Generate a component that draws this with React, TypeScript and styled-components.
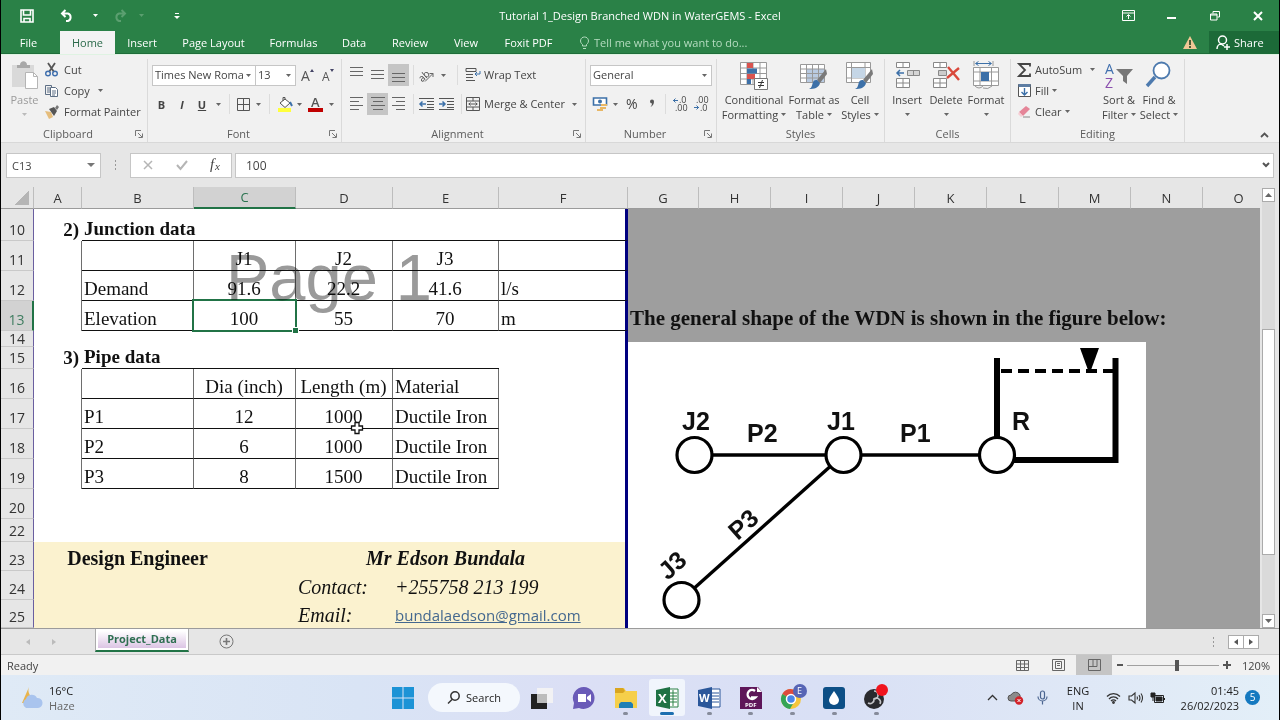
import React from "react";
import styled, { createGlobalStyle, css } from "styled-components";

const UI = `"Open Sans", "Noto Sans", sans-serif`;
const SERIF = `"Liberation Serif", "Times New Roman", serif`;
const GREEN = "#2a8147";
const CHROME = "#e6e6e6";
const LINE = "#c6c6c6";

const Global = createGlobalStyle`
  *, *::before, *::after { box-sizing: border-box; }
  body { margin: 0; background: #000; font-family: ${UI}; font-size: 11px; color: #444; }
  button, input, select { font: inherit; color: inherit; }
  button { background: none; border: 0; padding: 0; margin: 0; white-space: nowrap; }
  svg { display: block; flex: none; overflow: visible; }
`;

const Window = styled.div`
  display: flex;
  flex-direction: column;
  min-height: 100vh;
  border: solid #000;
  border-width: 0 1px;
  background: ${CHROME};
  overflow: hidden;
`;

/* ---------- title bar and ribbon tabs ---------- */

const TitleBar = styled.header`
  display: grid;
  grid-template-columns: 1fr auto 1fr;
  align-items: center;
  height: 31px;
  background: ${GREEN};
  color: #fff;
`;
const QuickAccess = styled.div`
  display: flex;
  align-items: center;
  padding-left: 12px;
`;
const WindowButtons = styled.div`
  display: flex;
  justify-content: flex-end;
`;
const WindowButton = styled.button`
  display: grid;
  place-items: center;
  width: 43px;
  height: 28px;
`;
const Title = styled.h1`
  margin: 0;
  font-size: 11px;
  font-weight: 400;
  line-height: 16px;
`;
const Slot = styled.button<{ $w: number; $on?: boolean; $start?: boolean }>`
  display: flex;
  align-items: center;
  justify-content: ${(p) => (p.$start ? "flex-start" : "center")};
  width: ${(p) => p.$w}px;
  height: 22px;
  flex: none;
  background: ${(p) => (p.$on ? "#c5c5c5" : "transparent")};
`;
const TabBar = styled.nav`
  display: flex;
  align-items: stretch;
  height: 23px;
  background: ${GREEN};
  color: #fff;
  box-shadow: inset 0 -1px 0 #1f6d3a;
`;
const Tab = styled.button<{ $w: number; $active?: boolean }>`
  width: ${(p) => p.$w}px;
  flex: none;
  line-height: 20px;
  &:first-child { margin-right: 4px; }
  ${(p) =>
    p.$active &&
    css`
      background: #f3f3f3;
      color: #2b6a4a;
    `}
`;
const TellMe = styled.button`
  display: flex;
  align-items: center;
  gap: 4px;
  padding-left: 13px;
  color: #b5dcc0;
`;
const TabBarEnd = styled.div`
  display: flex;
  align-items: center;
  gap: 12px;
  margin-left: auto;
`;
const Share = styled.button`
  display: flex;
  align-items: center;
  gap: 4px;
  width: 70px;
  height: 23px;
  padding-left: 7px;
  background: #1c6a38;
`;

/* ---------- ribbon ---------- */

const Ribbon = styled.section`
  display: flex;
  height: 89px;
  padding-top: 4px;
  background: #f1f1f1;
  border-top: 1px solid #dff3e2;
  border-bottom: 1px solid #d8d8d8;
`;
const Group = styled.div<{ $w: number; $pad?: number }>`
  display: flex;
  flex-direction: column;
  width: ${(p) => p.$w}px;
  flex: none;
  padding-left: ${(p) => p.$pad ?? 0}px;
  border-right: 1px solid #dadada;
`;
const GroupBody = styled.div<{ $rows?: boolean }>`
  display: flex;
  flex-direction: ${(p) => (p.$rows ? "column" : "row")};
  gap: ${(p) => (p.$rows ? 7 : 0)}px;
  padding-top: ${(p) => (p.$rows ? 5 : 0)}px;
  height: 67px;
`;
const GroupFoot = styled.div<{ $pull?: number }>`
  display: flex;
  align-items: center;
  height: 15px;
  margin-left: -${(p) => p.$pull ?? 0}px;
  color: #5c5c5c;
`;
const GroupLabel = styled.span`
  flex: 1;
  text-align: center;
  line-height: 14px;
`;
const Launcher = styled.button`
  width: 12px;
  height: 8px;
`;
const Tools = styled.div`
  display: flex;
  align-items: center;
  height: 22px;
`;
const Sep = styled.i<{ $w: number }>`
  display: block;
  width: ${(p) => p.$w}px;
  height: 20px;
  background: linear-gradient(#dcdcdc, #dcdcdc) center / 1px 100% no-repeat;
`;
const SmallTool = styled.button<{ $gap?: number }>`
  display: flex;
  align-items: center;
  gap: ${(p) => p.$gap ?? 4}px;
  height: 21px;
  line-height: 16px;
`;
const Stack = styled.div<{ $w?: number }>`
  display: flex;
  flex-direction: column;
  width: ${(p) => (p.$w ? p.$w + "px" : "auto")};
`;
const BigTool = styled.button<{ $w: number; $dim?: boolean }>`
  display: flex;
  flex-direction: column;
  align-items: center;
  width: ${(p) => p.$w}px;
  flex: none;
  padding-top: 2px;
  line-height: 15px;
  color: ${(p) => (p.$dim ? "#9b9b9b" : "#444")};
  svg { margin-bottom: 2px; }
`;
const BigLine = styled.span`
  display: flex;
  align-items: center;
  gap: 3px;
  height: 15px;
  svg { margin: 0; }
`;
const Picker = styled.label<{ $w: number }>`
  position: relative;
  display: flex;
  align-items: center;
  width: ${(p) => p.$w}px;
  height: 21px;
  background: #fff;
  border: 1px solid ${LINE};
  & + & { border-left: 0; }
  select {
    appearance: none;
    width: 100%;
    padding: 0 12px 0 2px;
    border: 0;
    background: none;
    line-height: 16px;
    outline: 0;
  }
  svg { position: absolute; right: 4px; }
`;
const Collapse = styled.button`
  align-self: flex-end;
  margin: 0 10px 4px auto;
`;

/* ---------- formula bar ---------- */

const FormulaBar = styled.div`
  display: flex;
  align-items: center;
  padding: 10px 5px;
  height: 44px;
`;
const NameBox = styled.label`
  display: flex;
  align-items: center;
  width: 95px;
  height: 25px;
  padding: 0 5px;
  background: #fff;
  border: 1px solid ${LINE};
  input { width: 100%; border: 0; padding: 0; background: none; outline: 0; }
`;
const Dots = styled.i`
  width: 29px;
  height: 12px;
  background: radial-gradient(circle, #999 1px, transparent 1px) center / 29px 4px;
`;
const FormulaButtons = styled.div`
  display: flex;
  align-items: center;
  width: 102px;
  height: 25px;
  background: #fff;
  border: 1px solid ${LINE};
`;
const FormulaField = styled.label`
  display: flex;
  align-items: center;
  flex: 1;
  height: 25px;
  margin-left: 3px;
  padding: 0 3px 0 10px;
  background: #fff;
  border: 1px solid ${LINE};
  input { flex: 1; border: 0; padding: 0; background: none; outline: 0; font-size: 12px; }
`;

/* ---------- sheet ---------- */

const SheetRow = styled.main`
  display: flex;
  flex: 1;
`;
const Sheet = styled.div`
  position: relative;
  flex: 1;
  min-width: 0;
  overflow: hidden;
  background: #9e9e9e;
`;
const Grid = styled.table`
  table-layout: fixed;
  width: 100%;
  min-width: 1274px;
  border-collapse: separate;
  border-spacing: 0;
`;
const ColHead = styled.th<{ $on?: boolean }>`
  height: 22px;
  padding: 0;
  font-size: 13px;
  font-weight: 400;
  line-height: 18px;
  color: ${(p) => (p.$on ? "#2a7350" : "#333")};
  background: ${(p) => (p.$on ? "#d2d2d2" : CHROME)};
  border-right: 1px solid #bdbdbd;
  border-bottom: ${(p) => (p.$on ? "2px solid #217346" : "1px solid #9b9b9b")};
`;
const Corner = styled(ColHead)`
  background: linear-gradient(135deg, transparent 50%, #b5b5b5 50%) 13px 4px / 15px 14px no-repeat, ${CHROME};
`;
const RowHead = styled.th<{ $on?: boolean; $h: number }>`
  height: ${(p) => p.$h}px;
  padding: 0 0 ${(p) => (p.$h < 20 ? 0 : 3)}px;
  vertical-align: bottom;
  font-size: 14px;
  font-weight: 400;
  line-height: 15px;
  color: ${(p) => (p.$on ? "#3f7d60" : "#333")};
  background: ${(p) => (p.$on ? "#d2d2d2" : CHROME)};
  border-bottom: 1px solid #c9c9c9;
  border-right: ${(p) => (p.$on ? "2px solid #217346" : "1px solid #6a5fa0")};
`;
const Cell = styled.td<{ $fill: string; $bottom?: boolean; $right?: boolean; $edge?: boolean; $selected?: boolean }>`
  position: ${(p) => (p.$selected ? "relative" : "static")};
  padding: 0 3px 0 2px;
  vertical-align: bottom;
  background: ${(p) => p.$fill};
  font-family: ${SERIF};
  line-height: 19px;
  color: #111;
  white-space: nowrap;
  border-bottom: ${(p) => (p.$bottom ? "1px solid #111" : "0")};
  border-right: ${(p) => (p.$edge ? "3px solid #00007f" : p.$right ? "1px solid #6e6e6e" : "0")};
`;
const TEXT_SIZE = { body: 19, lead: 20, note: 21 };
type Size = keyof typeof TEXT_SIZE;
const Content = styled.div<{ $align?: string; $bold?: boolean; $italic?: boolean; $size: Size }>`
  display: flex;
  height: ${(p) => (p.$size === "body" ? 21 : 22)}px;
  justify-content: ${(p) => p.$align ?? "flex-start"};
  font-weight: ${(p) => (p.$bold ? 700 : 400)};
  font-style: ${(p) => (p.$italic ? "italic" : "normal")};
  font-size: ${(p) => TEXT_SIZE[p.$size]}px;
`;
const Mail = styled.a`
  font-family: ${UI};
  font-size: 15px;
  color: #44688f;
`;
const Selection = styled.div`
  position: absolute;
  inset: -2px;
  border: 2px solid #217346;
  &::after {
    content: "";
    position: absolute;
    right: -3px;
    bottom: -3px;
    width: 5px;
    height: 5px;
    background: #217346;
    outline: 1px solid #fff;
  }
`;
const Watermark = styled.div`
  position: absolute;
  left: 225px;
  top: 54px;
  font: 65px/74px "Liberation Sans", Arial, sans-serif;
  color: #9a9a9a;
  mix-blend-mode: multiply;
  pointer-events: none;
`;
const Pointer = styled.svg`
  position: absolute;
  left: 349px;
  top: 234px;
`;
const Figure = styled.svg`
  position: absolute;
  left: 627px;
  top: 155px;
  background: #fff;
  overflow: hidden;
`;
const ScrollBar = styled.div`
  display: flex;
  flex-direction: column;
  width: 19px;
  padding: 1px 4px 0 2px;
  background: ${CHROME};
`;
const ScrollButton = styled.button`
  display: grid;
  place-items: center;
  height: 14px;
  background: #fff;
  border: 1px solid #ababab;
`;
const Track = styled.i<{ $grow: number }>`
  flex: ${(p) => p.$grow};
  background: #dadada;
`;
const Thumb = styled.i<{ $grow: number }>`
  flex: ${(p) => p.$grow};
  background: #fff;
  border: 1px solid #ababab;
`;

/* ---------- sheet tabs and status ---------- */

const SheetTabs = styled.div`
  display: flex;
  align-items: center;
  height: 27px;
  border-top: 1px solid #9b9b9b;
  border-bottom: 1px solid #c9c9c9;
`;
const SheetArrows = styled.div`
  display: flex;
  align-items: center;
  gap: 22px;
  width: 94px;
  padding-left: 25px;
`;
const SheetTab = styled.button`
  align-self: flex-start;
  width: 94px;
  height: 23px;
  padding: 0 2px 2px;
  border: 1px solid #ababab;
  border-top: 0;
  border-bottom: 2px solid #217346;
  background: linear-gradient(#fff 10%, #dcc4e4) center top / 88px 19px no-repeat, #fff;
  font-weight: 700;
  color: #2f6f52;
`;
const AddSheet = styled.button`
  margin-left: 30px;
`;
const SheetScroll = styled.div`
  display: flex;
  align-items: center;
  margin-left: auto;
  padding-right: 20px;
`;
const SideButton = styled.button`
  display: grid;
  place-items: center;
  width: 16px;
  height: 14px;
  background: #fff;
  border: 1px solid #ababab;
  & + & { margin-left: -1px; }
`;
const StatusBar = styled.footer`
  display: flex;
  align-items: center;
  height: 20px;
  padding: 0 9px 0 6px;
  background: #f1f1f1;
`;
const StatusTools = styled.div`
  display: flex;
  align-items: center;
  margin-left: auto;
`;
const ViewButton = styled.button<{ $on?: boolean }>`
  display: grid;
  place-items: center;
  width: 36px;
  height: 20px;
  background: ${(p) => (p.$on ? "#c5c5c5" : "transparent")};
`;
const Zoom = styled.input`
  appearance: none;
  width: 92px;
  height: 12px;
  margin: 0 4px 0 0;
  background: linear-gradient(#a0a0a0, #a0a0a0) center / 100% 1px no-repeat;
  &::-webkit-slider-thumb {
    appearance: none;
    width: 4px;
    height: 11px;
    background: #555;
  }
`;
const Percent = styled.span`
  width: 39px;
  text-align: right;
`;

/* ---------- taskbar ---------- */

const Taskbar = styled.footer`
  display: grid;
  grid-template-columns: 1fr auto 1fr;
  align-items: center;
  height: 45px;
  background: linear-gradient(90deg, #dfeaf6, #d9e4f5 28%, #dbdff5 45%, #d9e0f5 65%, #dfe8f6 85%, #e3eff8);
  color: #222;
  line-height: 15px;
`;
const Weather = styled.button`
  display: flex;
  align-items: center;
  gap: 4px;
  padding-left: 18px;
  text-align: left;
  line-height: 15px;
`;
const Dim = styled.span`
  color: #666;
`;
const Dock = styled.div`
  display: flex;
  align-items: center;
`;
const SearchPill = styled.button`
  display: flex;
  align-items: center;
  justify-content: center;
  gap: 6px;
  width: 92px;
  height: 29px;
  margin: 0 4px 0 8px;
  border-radius: 15px;
  background: #f4f8fd;
`;
const Apps = styled.div`
  display: flex;
  justify-content: space-between;
  width: 370px;
`;
const AppButton = styled.button<{ $on?: boolean; $run?: boolean }>`
  position: relative;
  display: grid;
  place-items: center;
  width: 36px;
  height: 37px;
  border-radius: 3px;
  background: ${(p) => (p.$on ? "#f1f5fc" : "transparent")};
  &::after {
    content: "";
    position: absolute;
    bottom: 1px;
    display: ${(p) => (p.$run ? "block" : "none")};
    width: ${(p) => (p.$on ? 14 : 5)}px;
    height: 3px;
    border-radius: 2px;
    background: ${(p) => (p.$on ? "#1d6fb0" : "#868b9a")};
  }
`;
const Tray = styled.div`
  display: flex;
  align-items: center;
  justify-content: flex-end;
  padding-right: 19px;
`;
const TrayText = styled.button<{ $w: number; $end?: boolean }>`
  width: ${(p) => p.$w}px;
  text-align: ${(p) => (p.$end ? "right" : "center")};
  line-height: 15px;
`;
const Badge = styled.span`
  width: 15px;
  height: 15px;
  margin-left: 6px;
  border-radius: 50%;
  background: #1479c0;
  color: #fff;
  text-align: center;
  font-size: 10px;
`;

/* ---------- icons ---------- */

type IconProps = { w: number; h: number; children: React.ReactNode; sw?: number; c?: string };
const Icon = ({ w, h, children, sw = 1, c = "#555" }: IconProps) => (
  <svg width={w} height={h} viewBox={`0 0 ${w} ${h}`} fill="none" stroke={c} strokeWidth={sw} aria-hidden="true">
    {children}
  </svg>
);
const Caret = ({ c = "#666" }: { c?: string }) => (
  <Icon w={5} h={3} c="none"><path d="M0 0h5L2.5 3z" fill={c} /></Icon>
);
const LaunchIcon = () => (
  <Icon w={8} h={8} c="#777"><path d="M.5 6V.5H6M3 3l4 4M7.5 3.5v4h-4" /></Icon>
);
const Lines = ({ rows, y = 0 }: { rows: [number, number][]; y?: number }) => (
  <Icon w={14} h={16} c="#666">
    <path d={rows.map(([a, b], i) => `M${a} ${y + i * 4 + 1.5}H${b}`).join("")} />
  </Icon>
);
const Brush = () => (
  <>
    <path d="M27 8l1 5-7 9-3-3z" fill="#7a7a7a" stroke="none" />
    <path d="M18 19l3 3c-1 5-6 6-11 6 3-1 3-4 4-7 1-2 3-2 4-2z" fill="#3c70a8" stroke="none" />
  </>
);

/* ---------- sheet data ---------- */

type Datum = {
  v: string; align?: "center" | "flex-end"; bold?: boolean; italic?: boolean; size?: Size; mail?: boolean;
};
const mid = (v: string): Datum => ({ v, align: "center" });
const COLS: [string, number | null][] = [
  ["A", 48], ["B", 112], ["C", 102], ["D", 97], ["E", 106], ["F", 129], ["G", 71], ["H", 72],
  ["I", 72], ["J", 72], ["K", 72], ["L", 72], ["M", 72], ["N", 72], ["O", null],
];
const ROWS: { n: number; h: number; cells: Record<string, Datum> }[] = [
  { n: 10, h: 32, cells: { A: { v: "2)", align: "flex-end", bold: true }, B: { v: "Junction data", bold: true } } },
  { n: 11, h: 30, cells: { C: mid("J1"), D: mid("J2"), E: mid("J3") } },
  { n: 12, h: 30, cells: { B: { v: "Demand" }, C: mid("91.6"), D: mid("22.2"), E: mid("41.6"), F: { v: "l/s" } } },
  {
    n: 13, h: 30,
    cells: {
      B: { v: "Elevation" }, C: mid("100"), D: mid("55"), E: mid("70"), F: { v: "m" },
      G: { v: "The general shape of the WDN is shown in the figure below:", bold: true, size: "note" },
    },
  },
  { n: 14, h: 16, cells: {} },
  { n: 15, h: 22, cells: { A: { v: "3)", align: "flex-end", bold: true }, B: { v: "Pipe data", bold: true } } },
  { n: 16, h: 30, cells: { C: mid("Dia (inch)"), D: mid("Length (m)"), E: { v: "Material" } } },
  { n: 17, h: 30, cells: { B: { v: "P1" }, C: mid("12"), D: mid("1000"), E: { v: "Ductile Iron" } } },
  { n: 18, h: 30, cells: { B: { v: "P2" }, C: mid("6"), D: mid("1000"), E: { v: "Ductile Iron" } } },
  { n: 19, h: 30, cells: { B: { v: "P3" }, C: mid("8"), D: mid("1500"), E: { v: "Ductile Iron" } } },
  { n: 20, h: 30, cells: {} },
  { n: 22, h: 23, cells: {} },
  {
    n: 23, h: 29,
    cells: {
      B: { v: "Design Engineer", align: "center", bold: true, size: "lead" },
      E: { v: "Mr Edson Bundala", align: "center", bold: true, italic: true, size: "lead" },
    },
  },
  { n: 24, h: 29, cells: { D: { v: "Contact:", italic: true, size: "lead" }, E: { v: "+255758 213 199", italic: true, size: "lead" } } },
  { n: 25, h: 28, cells: { D: { v: "Email:", italic: true, size: "lead" }, E: { v: "bundalaedson@gmail.com", size: "lead", mail: true } } },
];

const lastTableCol = (n: number) => (n >= 10 && n <= 13 ? "F" : n >= 15 && n <= 19 ? "E" : "");
const hasBottom = (n: number, c: string) => c >= "B" && c <= lastTableCol(n);
const hasRight = (n: number, c: string) => n !== 10 && n !== 15 && c <= lastTableCol(n);

const SheetGrid = () => (
  <Grid>
    <colgroup>
      <col style={{ width: 33 }} />
      {COLS.map(([c, w]) => <col key={c} style={w ? { width: w } : undefined} />)}
    </colgroup>
    <thead>
      <tr>
        <Corner aria-label="Select all" />
        {COLS.map(([c]) => <ColHead key={c} scope="col" $on={c === "C"}>{c}</ColHead>)}
      </tr>
    </thead>
    <tbody>
      {ROWS.map((r) => (
        <tr key={r.n}>
          <RowHead scope="row" $h={r.h} $on={r.n === 13}>{r.n}</RowHead>
          {COLS.map(([c]) => {
            const d = r.cells[c];
            const fill = c > "F" ? "#9e9e9e" : r.n >= 23 ? "#fbf2cf" : "#fff";
            const selected = r.n === 13 && c === "C";
            return (
              <Cell key={c} $fill={fill} $bottom={hasBottom(r.n, c)} $right={hasRight(r.n, c)} $edge={c === "F"} $selected={selected}>
                {d && (
                  <Content $align={d.align} $bold={d.bold} $italic={d.italic} $size={d.size ?? "body"}>
                    {d.mail ? <Mail href={`mailto:${d.v}`}>{d.v}</Mail> : d.v}
                  </Content>
                )}
                {selected && <Selection />}
              </Cell>
            );
          })}
        </tr>
      ))}
    </tbody>
  </Grid>
);

const Network = () => (
  <Figure width={518} height={287} viewBox="628 342 518 287" role="img" aria-label="Branched water network">
    <g stroke="#000" fill="none">
      <path d="M694 455H997" strokeWidth={3.4} />
      <path d="M843 455L681 600" strokeWidth={3.4} />
      <path d="M997 358V455M1115.500 358V460H1010" strokeWidth={6} strokeLinejoin="miter" />
      <path d="M1001 371H1113" strokeWidth={4} strokeDasharray="11 6" />
    </g>
    <path d="M1080 348h19l-8 22h-3z" fill="#000" />
    <g fill="#fff" stroke="#000" strokeWidth={3.2}>
      <circle cx={694.5} cy={455} r={17.500} />
      <circle cx={843.5} cy={455} r={17.500} />
      <circle cx={997} cy={455} r={17.500} />
      <circle cx={681.5} cy={600} r={17.500} />
    </g>
    <g fontFamily='"Liberation Sans", Arial, sans-serif' fontWeight={700} fontSize={25} fill="#111">
      <text x={682} y={430}>J2</text>
      <text x={747} y={442}>P2</text>
      <text x={827} y={430}>J1</text>
      <text x={900} y={442}>P1</text>
      <text x={1012} y={430}>R</text>
      <text transform="translate(743 524) rotate(-42)" textAnchor="middle" dominantBaseline="central">P3</text>
      <text transform="translate(672 565) rotate(-42)" textAnchor="middle" dominantBaseline="central">J3</text>
    </g>
  </Figure>
);

/* ---------- ribbon groups ---------- */

const TABS: [string, number][] = [
  ["Home", 55], ["Insert", 54], ["Page Layout", 89], ["Formulas", 71], ["Data", 50], ["Review", 62], ["View", 50], ["Foxit PDF", 75],
];

const Foot = ({ label, launch, pull }: { label: string; launch?: boolean; pull?: number }) => (
  <GroupFoot $pull={pull}>
    <GroupLabel>{label}</GroupLabel>
    {launch && <Launcher aria-label={`${label} settings`}><LaunchIcon /></Launcher>}
  </GroupFoot>
);

const Clipboard = () => (
  <Group $w={147} $pad={4}>
    <GroupBody>
      <BigTool $w={39} $dim>
        <Icon w={28} h={29} c="none">
          <path d="M1 4h22v22H1z" fill="#d9d9d9" />
          <path d="M6 7V4h3c0-5 7-5 7 0h3v3z" fill="#a8a8a8" />
          <path d="M14.500 11.500h8l4 4v12h-12z" fill="#fff" stroke="#b5b5b5" />
          <path d="M22.500 11.500v4h4" stroke="#b5b5b5" />
        </Icon>
        Paste
        <BigLine><Caret c="#bbb" /></BigLine>
      </BigTool>
      <Stack>
        <SmallTool>
          <Icon w={16} h={15}>
            <path d="M4 1l6 9M11 1L5 10" strokeWidth={1.8} />
            <circle cx={4} cy={11.500} r={2.300} stroke="#3f6fae" strokeWidth={1.4} />
            <circle cx={11} cy={11.500} r={2.300} stroke="#3f6fae" strokeWidth={1.4} />
          </Icon>
          Cut
        </SmallTool>
        <SmallTool>
          <Icon w={16} h={14} c="#5d6f85">
            <path d="M1.500 1.500h6v9h-6zM3 4h3M3 6h3M3 8h3" />
            <path d="M6.500 3.500h5l2 2v7h-7z" fill="#fff" />
            <path d="M8 7h4M8 9h4M8 11h3" />
          </Icon>
          Copy <Slot as="span" $w={14}><Caret /></Slot>
        </SmallTool>
        <SmallTool>
          <Icon w={16} h={14} c="none">
            <path d="M1 6l6 1 2 5-4 2z" fill="#e5bd7c" />
            <path d="M5 4l5-2 3 4-3 5z" fill="#555" />
            <path d="M11 3l2-3 2 2-2 3z" fill="#777" />
          </Icon>
          Format Painter
        </SmallTool>
      </Stack>
    </GroupBody>
    <Foot label="Clipboard" launch pull={4} />
  </Group>
);

const FontGroup = () => (
  <Group $w={194} $pad={4}>
    <GroupBody $rows>
      <Tools>
        <Picker $w={104}><select aria-label="Font"><option>Times New Roman</option></select><Caret /></Picker>
        <Picker $w={40}><select aria-label="Font size"><option>13</option></select><Caret /></Picker>
        <Slot $w={24} aria-label="Grow font">
          <Icon w={14} h={14} c="none"><text x={0} y={13} fontSize={14} fill="#555">A</text><path d="M9 4l2-3 2 3z" fill="#446" /></Icon>
        </Slot>
        <Slot $w={16} aria-label="Shrink font">
          <Icon w={13} h={14} c="none"><text x={0} y={13} fontSize={12} fill="#555">A</text><path d="M8 1h4l-2 3z" fill="#446" /></Icon>
        </Slot>
      </Tools>
      <Tools>
        <Slot $w={19}><b>B</b></Slot>
        <Slot $w={22}><b><i>I</i></b></Slot>
        <Slot $w={18}><b><u>U</u></b></Slot>
        <Slot $w={14} aria-label="Underline styles"><Caret /></Slot>
        <Sep $w={8} />
        <Slot $w={20} aria-label="Borders"><Icon w={13} h={13}><path d="M.5.5h12v12H.5zM6.500.5v12M.5 6.500h12" /></Icon></Slot>
        <Slot $w={10} aria-label="Border styles"><Caret /></Slot>
        <Sep $w={12} />
        <Slot $w={20} aria-label="Fill colour">
          <Icon w={16} h={16}>
            <path d="M3 7l5-4 5 4-5 4.500z" fill="#fff" /><path d="M6 5V1.500h2V4" /><path d="M13 6l2 4" stroke="#3c70a8" strokeWidth={2} />
            <path d="M1 12h13v4H1z" fill="#ffff3c" stroke="none" />
          </Icon>
        </Slot>
        <Slot $w={8} aria-label="Fill colours"><Caret /></Slot>
        <Slot $w={24} aria-label="Font colour">
          <Icon w={15} h={16} c="none"><text x={3} y={11} fontSize={13} fontWeight={600} fill="#555">A</text><path d="M0 12h15v4H0z" fill="#c00000" /></Icon>
        </Slot>
        <Slot $w={8} aria-label="Font colours"><Caret /></Slot>
      </Tools>
    </GroupBody>
    <Foot label="Font" launch pull={4} />
  </Group>
);

const Alignment = () => (
  <Group $w={244} $pad={4}>
    <GroupBody $rows>
      <Tools>
        <Slot $w={21} aria-label="Top align"><Lines rows={[[0, 13], [0, 13], [0, 13]]} y={-1} /></Slot>
        <Slot $w={21} aria-label="Middle align"><Lines rows={[[0, 13], [0, 13], [0, 13]]} y={2} /></Slot>
        <Slot $w={21} $on aria-label="Bottom align"><Lines rows={[[0, 13], [0, 13], [0, 13]]} y={5} /></Slot>
        <Sep $w={8} />
        <Slot $w={20} aria-label="Orientation">
          <Icon w={16} h={14} c="none">
            <text x={0} y={11} fontSize={10} fill="#444" transform="rotate(-42 6 9)">ab</text>
            <path d="M6 13.500l8-8M14 9V5.500h-3.500" stroke="#666" />
          </Icon>
        </Slot>
        <Slot $w={12} aria-label="Orientations"><Caret /></Slot>
        <Sep $w={16} />
        <SmallTool $gap={3}>
          <Icon w={16} h={16}>
            <path d="M1 1.500h10v3H1zM1 7.500h7M1 10.500h7M1 13.500h9" /><path d="M11 7h4V4M10 7l2-2M10 7l2 2" stroke="#3c70a8" />
          </Icon>
          Wrap Text
        </SmallTool>
      </Tools>
      <Tools>
        <Slot $w={21} aria-label="Align left"><Lines rows={[[0, 13], [0, 9], [0, 13], [0, 9]]} /></Slot>
        <Slot $w={21} $on aria-label="Centre"><Lines rows={[[0, 14], [2, 12], [0, 14], [2, 12]]} /></Slot>
        <Slot $w={21} aria-label="Align right"><Lines rows={[[0, 13], [4, 13], [0, 13], [4, 13]]} /></Slot>
        <Sep $w={8} />
        <Slot $w={20} aria-label="Decrease indent">
          <Icon w={16} h={14}><path d="M0 1.500h15M8 4.500h7M8 7.500h7M8 10.500h7M0 12.500h15" /><path d="M1 7h6M3.500 4.500L1 7l2.500 2.500" stroke="#3c70a8" strokeWidth={1.500} /></Icon>
        </Slot>
        <Slot $w={20} aria-label="Increase indent">
          <Icon w={16} h={14}><path d="M0 1.500h15M8 4.500h7M8 7.500h7M8 10.500h7M0 12.500h15" /><path d="M0 7h6M3.500 4.500L6 7 3.500 9.500" stroke="#3c70a8" strokeWidth={1.500} /></Icon>
        </Slot>
        <Sep $w={8} />
        <SmallTool $gap={3}>
          <Icon w={16} h={16}><path d="M1.500 1.500h13v13h-13zM1.500 5h13M1.500 11h13M8 1.500V5M8 11v3.500M3.500 8h9M5.500 6.500L4 8l1.500 1.500M10.500 6.500L12 8l-1.500 1.500" /></Icon>
          Merge &amp; Center
        </SmallTool>
        <Slot $w={20} aria-label="Merge options"><Caret /></Slot>
      </Tools>
    </GroupBody>
    <Foot label="Alignment" launch pull={4} />
  </Group>
);

const NumberGroup = () => (
  <Group $w={131} $pad={4}>
    <GroupBody $rows>
      <Tools><Picker $w={122}><select aria-label="Number format"><option>General</option></select><Caret /></Picker></Tools>
      <Tools>
        <Slot $w={20} aria-label="Accounting format">
          <Icon w={16} h={16} c="none">
            <path d="M1.500 2h13v7h-13z" fill="#fff" stroke="#3c70a8" strokeWidth={1.600} /><circle cx={8} cy={5.500} r={2} fill="#3c70a8" />
            <path d="M9 8h6v2H9zM8 11h6v2H8zM5 13h6v2H5z" fill="#e8b765" />
          </Icon>
        </Slot>
        <Slot $w={10} aria-label="Accounting formats"><Caret /></Slot>
        <Slot $w={24} aria-label="Percent"><Icon w={14} h={14} c="none"><text x={1} y={12} fontSize={14} fill="#444">%</text></Icon></Slot>
        <Slot $w={16} aria-label="Comma style"><Icon w={6} h={10} c="none"><path d="M1 2.500a2 2 0 114 0Q5 6 1.500 8 3 6 3 4.500A2 2 0 011 2.500z" fill="#555" /></Icon></Slot>
        <Sep $w={10} />
        <Slot $w={21} aria-label="Increase decimal">
          <Icon w={15} h={14} c="none"><text x={6} y={6} fontSize={9} fill="#444">.0</text><text x={2} y={14} fontSize={9} fill="#444">.00</text><path d="M0 3.500h5M2.500 1.500l-2 2 2 2" stroke="#3c70a8" /></Icon>
        </Slot>
        <Slot $w={21} aria-label="Decrease decimal">
          <Icon w={15} h={14} c="none"><text x={2} y={6} fontSize={9} fill="#444">.00</text><text x={6} y={14} fontSize={9} fill="#444">.0</text><path d="M0 10.500h5M2.500 8.500l2 2-2 2" stroke="#3c70a8" /></Icon>
        </Slot>
      </Tools>
    </GroupBody>
    <Foot label="Number" launch pull={4} />
  </Group>
);

const StylesGroup = () => (
  <Group $w={168} $pad={2}>
    <GroupBody>
      <BigTool $w={70}>
        <Icon w={30} h={29} c="#999">
          <path d="M1.500 1.500h26v22h-26zM1.500 7h26M1.500 12.500h26M1.500 18h26M8 1.500v22M14 1.500v22M21 1.500v22" fill="#fff" />
          <path d="M8 2h6v5H8zM8 13h8v5H8z" fill="#d9534f" stroke="none" /><path d="M8 7.500h10v5H8zM8 18h4v5H8z" fill="#3c70a8" stroke="none" />
          <path d="M15.500 17.500h13v11h-13z" fill="#fff" stroke="#777" /><path d="M19 21.500h6M19 24.500h6M23.500 19l-3 8" stroke="#333" />
        </Icon>
        Conditional
        <BigLine>Formatting <Caret /></BigLine>
      </BigTool>
      <BigTool $w={50}>
        <Icon w={30} h={29} c="#999">
          <path d="M1.500 3.500h24v18h-24z" fill="#fff" /><path d="M8 8h17v13H8z" fill="#b9cbe2" stroke="none" />
          <path d="M1.500 8h24M1.500 12.500h24M1.500 17h24M7.500 3.500v18M13.500 3.500v18M19.500 3.500v18" /><Brush />
        </Icon>
        Format as
        <BigLine>Table <Caret /></BigLine>
      </BigTool>
      <BigTool $w={42}>
        <Icon w={30} h={29} c="#999">
          <path d="M1.500 1.500h24v20h-24z" fill="#fff" /><path d="M1.500 6.500h24M1.500 17h24M6.500 1.500v20M20 1.500v20" /><path d="M7 7h13v10H7z" fill="#c5d6e6" stroke="none" /><Brush />
        </Icon>
        Cell
        <BigLine>Styles <Caret /></BigLine>
      </BigTool>
    </GroupBody>
    <Foot label="Styles" pull={2} />
  </Group>
);

const CellsGroup = () => (
  <Group $w={126} $pad={3}>
    <GroupBody>
      <BigTool $w={38}>
        <Icon w={26} h={29} c="#888">
          <path d="M2.500 1.500h13v5h-13zM9 1.500v5M2.500 17.500h13v9h-13zM2.500 22h13M9 17.500v9" fill="#fff" />
          <path d="M13.500 9.500h12v5h-12zM19.500 9.500v5" fill="#d5d5d5" /><path d="M3 12h7M6 9l-3 3 3 3" stroke="#3c70a8" strokeWidth={1.500} />
        </Icon>
        Insert
        <BigLine><Caret /></BigLine>
      </BigTool>
      <BigTool $w={40}>
        <Icon w={28} h={29} c="#888">
          <path d="M1.500 1.500h13v5h-13zM8 1.500v5M1.500 17.500h13v9h-13zM1.500 22h13M8 17.500v9" fill="#fff" />
          <path d="M6.500 9.500h8v5h-8z" fill="#ccc" /><path d="M16 6l11 13M27 7L15 17" stroke="#d9483b" strokeWidth={2.400} />
        </Icon>
        Delete
        <BigLine><Caret /></BigLine>
      </BigTool>
      <BigTool $w={40}>
        <Icon w={28} h={29} c="#999">
          <path d="M1.500 6.500h25v18h-25zM1.500 11h25M1.500 20h25M8 6.500v18M19.500 6.500v18" fill="#fff" /><path d="M9 11h8v9H9z" fill="#3c70a8" stroke="none" />
          <path d="M2 0v5M21 0v5" /><path d="M4 2.500h15M6.500.5l-3 2 3 2M16.500.5l3 2-3 2" stroke="#3c70a8" /><path d="M3 25q4 4 8 0M11 27q5 2 9-2" />
        </Icon>
        Format
        <BigLine><Caret /></BigLine>
      </BigTool>
    </GroupBody>
    <Foot label="Cells" pull={3} />
  </Group>
);

const Editing = () => (
  <Group $w={174} $pad={6}>
    <GroupBody>
      <Stack $w={81}>
        <SmallTool $gap={3}>
          <Icon w={15} h={14} sw={1.800} c="#444"><path d="M13 3.500V1H2l6 6-6 6h11v-2.500" /></Icon>
          AutoSum <Slot as="span" $w={15}><Caret /></Slot>
        </SmallTool>
        <SmallTool $gap={3}>
          <Icon w={15} h={15}><path d="M1.500 1.500h12v12h-12z" fill="#fff" /><path d="M1.500 2.500h12" stroke="#5d7da3" strokeWidth={3} /><path d="M7.500 5v7M4.500 9l3 3 3-3" stroke="#3c70a8" strokeWidth={1.400} /></Icon>
          <BigLine>Fill <Caret /></BigLine>
        </SmallTool>
        <SmallTool $gap={3}>
          <Icon w={15} h={13} c="none"><path d="M2 7l7-6 4 3-7 7z" fill="#e58598" /><path d="M2 7l4 4-2 1-3-3z" fill="#f6cdd4" /><path d="M6 12h7" stroke="#888" /></Icon>
          <BigLine>Clear <Caret /></BigLine>
        </SmallTool>
      </Stack>
      <BigTool $w={42}>
        <Icon w={28} h={29} c="none">
          <text x={0} y={13} fontSize={14} fill="#3f6fae">A</text><text x={0} y={27} fontSize={14} fill="#8a4fae">Z</text>
          <path d="M11 8h17l-6 7v8l-4-3v-5z" fill="#777" />
        </Icon>
        Sort &amp;
        <BigLine>Filter <Caret /></BigLine>
      </BigTool>
      <BigTool $w={38}>
        <Icon w={28} h={29} c="#4d7aae">
          <path d="M10 16L2 25" strokeWidth={3.400} /><circle cx={16.500} cy={9.500} r={8} fill="#fff" strokeWidth={1.800} />
        </Icon>
        Find &amp;
        <BigLine>Select <Caret /></BigLine>
      </BigTool>
    </GroupBody>
    <Foot label="Editing" pull={6} />
  </Group>
);

/* ---------- taskbar apps ---------- */

const APPS: { name: string; run?: boolean; on?: boolean; art: React.ReactNode }[] = [
  { name: "Task view", art: <><path d="M1 8h16v15H1z" fill="#222" /><path d="M7 2h16v15H7z" fill="#f2f2f4" /><path d="M7 8h10v9H7z" fill="#bcbcbc" /></> },
  { name: "Chat", art: <><path d="M12 1a11 11 0 11-5 21l-6 1 1-6A11 11 0 0112 1z" fill="#6a5bb8" /><path d="M6 8h8v8H6z" fill="#fff" /><path d="M15 11l4-3v8l-4-3z" fill="#fff" /></> },
  { name: "File Explorer", run: true, art: <><path d="M1 2h9l2 3h11v17H1z" fill="#f6cf4a" /><path d="M1 2h8l2 3-2 2H1z" fill="#d9a520" /><path d="M5 22v-4l2-2h10l2 2v4z" fill="#1f7fb5" /></> },
  { name: "Excel", run: true, on: true, art: <><path d="M12 3h11v18H12z" fill="#fff" stroke="#2a8147" /><path d="M14 7h8M14 10h8M14 13h8M14 16h8M18 4v16" stroke="#2a8147" /><path d="M1 4l14-3v22L1 20z" fill="#1f7244" /><text x={3} y={17} fontSize={13} fontWeight={700} fill="#fff">X</text></> },
  { name: "Word", run: true, art: <><path d="M12 3h11v18H12z" fill="#fff" stroke="#2b579a" /><path d="M14 7h8M14 10h8M14 13h8M14 16h8" stroke="#2b579a" /><path d="M1 4l14-3v22L1 20z" fill="#2b579a" /><text x={2} y={16} fontSize={11} fontWeight={700} fill="#fff">W</text></> },
  { name: "Foxit PDF", run: true, art: <><path d="M1 1h18l4 5v17H1z" fill="#5e1659" /><path d="M18 1v5h5z" fill="#fff" /><path d="M16 5a4.500 4.500 0 10.500 6.500H12" stroke="#fff" strokeWidth={2.400} /><text x={6} y={21} fontSize={6} fontWeight={700} fill="#fff">PDF</text></> },
  { name: "Chrome", run: true, art: <><circle cx={10} cy={13} r={10} fill="#f5c63c" /><path d="M10 13L1.300 8A10 10 0 0119 9z" fill="#dd4b3e" /><path d="M10 13L1.300 8A10 10 0 009 23l4-7z" fill="#35a455" /><circle cx={10} cy={13} r={4.500} fill="#4a86e8" stroke="#fff" strokeWidth={1.500} /><circle cx={19} cy={5} r={7} fill="#5765b5" /><text x={16} y={8} fontSize={9} fill="#fff">E</text></> },
  { name: "WaterGEMS", run: true, art: <><rect x={1} y={1} width={22} height={22} rx={3} fill="#0d4f86" /><path d="M12 5q-5 7-5 9a5 5 0 0010 0q0-2-5-9z" fill="#fff" /></> },
  { name: "OBS", run: true, art: <><circle cx={10} cy={13} r={10} fill="#2a2a2e" /><path d="M10 5a4 4 0 010 8 4 4 0 01-6 4M10 13a4 4 0 016 5" stroke="#c4c4c8" strokeWidth={1.600} /><circle cx={18} cy={4} r={6} fill="#f0141e" /></> },
];

export default function App() {
  return (
    <Window>
      <Global />
      <TitleBar>
        <QuickAccess>
          <Slot $w={28} aria-label="Save"><Icon w={14} h={14} c="#fff" sw={1.600}><path d="M1 1h12v12H1zM3.500 1v5h7V1M4 13V9.500h6V13" /></Icon></Slot>
          <Slot $w={52} aria-label="Undo"><Icon w={14} h={13} c="#fff" sw={2}><path d="M5.500 1L2 4.500 5.500 8M2 4.500h6a4 4 0 010 7.500H6" /></Icon></Slot>
          <Slot $w={20} $start aria-label="Undo history"><Caret c="#fff" /></Slot>
          <Slot $w={26} $start aria-label="Redo"><Icon w={14} h={13} c="#5b9f70" sw={2}><path d="M8.500 1L12 4.500 8.500 8M12 4.500H6A4 4 0 006 12h2" /></Icon></Slot>
          <Slot $w={34} $start aria-label="Redo history"><Caret c="#5b9f70" /></Slot>
          <Slot $w={8} aria-label="Customise toolbar"><Icon w={6} h={6} c="#fff"><path d="M1 .5h4" /><path d="M0 3h6L3 6z" fill="#fff" stroke="none" /></Icon></Slot>
        </QuickAccess>
        <Title>Tutorial 1_Design Branched WDN in WaterGEMS - Excel</Title>
        <WindowButtons>
          <WindowButton aria-label="Ribbon display options"><Icon w={13} h={11} c="#fff"><path d="M.5.5h12v10H.5zM.5 3h12M6.500 9V5M4.500 6.500l2-2 2 2" /></Icon></WindowButton>
          <WindowButton aria-label="Minimise"><Icon w={9} h={10} c="#fff" sw={2}><path d="M0 7h9" /></Icon></WindowButton>
          <WindowButton aria-label="Restore"><Icon w={10} h={10} c="#fff"><path d="M3 2.500V.5h6.500V6h-2M.5 3h6.500v6H.5zM.5 4h6.500" /></Icon></WindowButton>
          <WindowButton aria-label="Close"><Icon w={10} h={10} c="#fff" sw={2}><path d="M1 1l8 8M9 1L1 9" /></Icon></WindowButton>
        </WindowButtons>
      </TitleBar>
      <TabBar>
        <Tab $w={55}>File</Tab>
        {TABS.map(([t, w]) => <Tab key={t} $w={w} $active={t === "Home"}>{t}</Tab>)}
        <TellMe>
          <Icon w={11} h={14} c="#b5dcc0"><path d="M3.500 10V8.500C0 6 1.500 1 5.500 1s5.500 5 2 7.500V10zM4 12.500h3" /></Icon>
          Tell me what you want to do...
        </TellMe>
        <TabBarEnd>
          <Icon w={14} h={13} c="none"><path d="M7 0l7 13H0z" fill="#efc795" /><path d="M6 4h2v5H6zM6 10h2v2H6z" fill="#4a5c35" /></Icon>
          <Share>
            <Icon w={14} h={15} c="#fff" sw={1.500}><circle cx={6.500} cy={5} r={4} /><path d="M1 14c0-3 2-5 4-5l3 2M11 9v6M8 12h6" /></Icon>
            Share
          </Share>
        </TabBarEnd>
      </TabBar>
      <Ribbon>
        <Clipboard />
        <FontGroup />
        <Alignment />
        <NumberGroup />
        <StylesGroup />
        <CellsGroup />
        <Editing />
        <Collapse aria-label="Collapse ribbon"><Icon w={9} h={6} sw={1.800}><path d="M1 5l3.500-3.500L8 5" /></Icon></Collapse>
      </Ribbon>
      <FormulaBar>
        <NameBox><input aria-label="Name box" defaultValue="C13" /><Icon w={8} h={4} c="none"><path d="M0 0h8L4 4z" fill="#777" /></Icon></NameBox>
        <Dots />
        <FormulaButtons>
          <Slot $w={34} aria-label="Cancel"><Icon w={10} h={10} c="#b5b5b5" sw={1.500}><path d="M1 1l8 8M9 1L1 9" /></Icon></Slot>
          <Slot $w={34} aria-label="Enter"><Icon w={12} h={10} c="#b5b5b5" sw={2}><path d="M1 5l3.500 4L11 1" /></Icon></Slot>
          <Slot $w={32} aria-label="Insert function">
            <Icon w={14} h={14} c="none"><text x={2} y={11} fontFamily={SERIF} fontStyle="italic" fontSize={15} fill="#444">f</text><text x={7} y={12} fontFamily={SERIF} fontStyle="italic" fontSize={11} fill="#444">x</text></Icon>
          </Slot>
        </FormulaButtons>
        <FormulaField><input aria-label="Formula" defaultValue="100" /><Icon w={8} h={6} sw={2}><path d="M1 1l3 3 3-3" /></Icon></FormulaField>
      </FormulaBar>
      <SheetRow>
        <Sheet>
          <SheetGrid />
          <Watermark>Page 1</Watermark>
          <Network />
          <Pointer width={14} height={14} viewBox="0 0 14 14" aria-hidden="true">
            <path d="M5 1.500h4V5h3.500v4H9v3.500H5V9H1.500V5H5z" fill="#fff" stroke="#111" strokeWidth={1.300} />
          </Pointer>
        </Sheet>
        <ScrollBar>
          <ScrollButton aria-label="Scroll up"><Icon w={7} h={4} c="none"><path d="M0 4h7L3.500 0z" fill="#666" /></Icon></ScrollButton>
          <Track $grow={128} />
          <Thumb $grow={226} />
          <Track $grow={59} />
          <ScrollButton aria-label="Scroll down"><Icon w={7} h={4} c="none"><path d="M0 0h7L3.500 4z" fill="#666" /></Icon></ScrollButton>
        </ScrollBar>
      </SheetRow>
      <SheetTabs>
        <SheetArrows>
          <Icon w={4} h={6} c="none"><path d="M4 0v6L0 3z" fill="#bbb" /></Icon>
          <Icon w={4} h={6} c="none"><path d="M0 0v6l4-3z" fill="#bbb" /></Icon>
        </SheetArrows>
        <SheetTab>Project_Data</SheetTab>
        <AddSheet aria-label="New sheet"><Icon w={15} h={15} c="#777"><circle cx={7.500} cy={7.500} r={6.500} /><path d="M7.500 4v7M4 7.500h7" strokeWidth={1.600} /></Icon></AddSheet>
        <SheetScroll>
          <Dots />
          <SideButton aria-label="Scroll left"><Icon w={4} h={6} c="none"><path d="M4 0v6L0 3z" fill="#555" /></Icon></SideButton>
          <SideButton aria-label="Scroll right"><Icon w={4} h={6} c="none"><path d="M0 0v6l4-3z" fill="#555" /></Icon></SideButton>
        </SheetScroll>
      </SheetTabs>
      <StatusBar>
        Ready
        <StatusTools>
          <ViewButton aria-label="Normal view"><Icon w={13} h={11} c="#666"><path d="M.5.5h12v10H.5zM4.500.5v10M8.500.5v10M.5 4h12M.5 7.500h12" /></Icon></ViewButton>
          <ViewButton aria-label="Page layout view"><Icon w={13} h={12} c="#666"><path d="M.5.5h12v11H.5zM3.500 2.500h6v7h-6zM5 4.500h3M5 6.500h3" /></Icon></ViewButton>
          <ViewButton $on aria-label="Page break preview"><Icon w={13} h={12} c="#666"><path d="M.5.5h12v11H.5zM1 7.500h8V.5M5 .5v7" /></Icon></ViewButton>
          <Slot $w={15} aria-label="Zoom out"><Icon w={6} h={2} sw={2}><path d="M0 1h6" /></Icon></Slot>
          <Zoom type="range" min={0} max={100} defaultValue={54} aria-label="Zoom" />
          <Slot $w={8} aria-label="Zoom in"><Icon w={8} h={8} sw={2}><path d="M0 4h8M4 0v8" /></Icon></Slot>
          <Percent>120%</Percent>
        </StatusTools>
      </StatusBar>
      <Taskbar>
        <Weather>
          <Icon w={26} h={26} c="none">
            <path d="M10 2a9 9 0 007 12l-4 4H3z" fill="#e9b44c" />
            <path d="M7 23a5 5 0 010-9 6 6 0 0111-1 5 5 0 011 10z" fill="#a9c4ee" />
          </Icon>
          <span>16°C<br /><Dim>Haze</Dim></span>
        </Weather>
        <Dock>
          <Slot $w={34} aria-label="Start"><Icon w={22} h={22} c="none"><path d="M0 0h10.500v10.500H0zM11.500 0H22v10.500H11.500zM0 11.500h10.500V22H0zM11.500 11.500H22V22H11.500z" fill="#1c93d6" /></Icon></Slot>
          <SearchPill><Icon w={13} h={13} c="#333" sw={1.500}><circle cx={8} cy={5} r={4.200} /><path d="M5 8.500L1 12.500" /></Icon>Search</SearchPill>
          <Apps>
            {APPS.map((a) => (
              <AppButton key={a.name} $run={a.run} $on={a.on} aria-label={a.name}><Icon w={24} h={24} c="none">{a.art}</Icon></AppButton>
            ))}
          </Apps>
        </Dock>
        <Tray>
          <Slot $w={22} aria-label="Hidden icons"><Icon w={11} h={7} c="#333" sw={1.300}><path d="M1 6l4.500-4.500L10 6" /></Icon></Slot>
          <Slot $w={26} aria-label="OneDrive">
            <Icon w={16} h={14} c="none"><path d="M3 10a3 3 0 010-6 5 5 0 019 0v6z" fill="#8b8b8b" stroke="#555" /><circle cx={11} cy={9.500} r={4.200} fill="#d2232a" /><path d="M9.500 8l3 3M12.500 8l-3 3" stroke="#fff" /></Icon>
          </Slot>
          <Slot $w={26} aria-label="Microphone"><Icon w={11} h={15} c="#4b6590" sw={1.200}><rect x={3.500} y={1} width={4} height={8} rx={2} /><path d="M1 6.500a4.500 4.500 0 009 0M5.500 11v3.500" /></Icon></Slot>
          <TrayText $w={46}>ENG<br />IN</TrayText>
          <Slot $w={24} aria-label="Wi-Fi"><Icon w={15} h={12} c="#333" sw={1.300}><path d="M1 4.500a9 9 0 0113 0M3 7a6 6 0 019 0M5 9a3.500 3.500 0 015 0" /><circle cx={7.500} cy={10.500} r={.8} /></Icon></Slot>
          <Slot $w={22} aria-label="Volume"><Icon w={16} h={12} c="#333" sw={1.100}><path d="M1 4v4h2.500L7 11V1L3.500 4zM9 4.500q1 1.500 0 3M11 3q2 3 0 6M13 1.500q3 4.500 0 9" /></Icon></Slot>
          <Slot $w={22} aria-label="Battery"><Icon w={16} h={12} c="#222"><path d="M4.500 3.500h9v7h-9zM14.500 6v2" /><path d="M6 5h6v4H6z" fill="#222" /><path d="M1 1h4v4H1zM3 5v4" fill="#222" /></Icon></Slot>
          <TrayText $w={70} $end>01:45<br />26/02/2023</TrayText>
          <Badge>5</Badge>
        </Tray>
      </Taskbar>
    </Window>
  );
}
